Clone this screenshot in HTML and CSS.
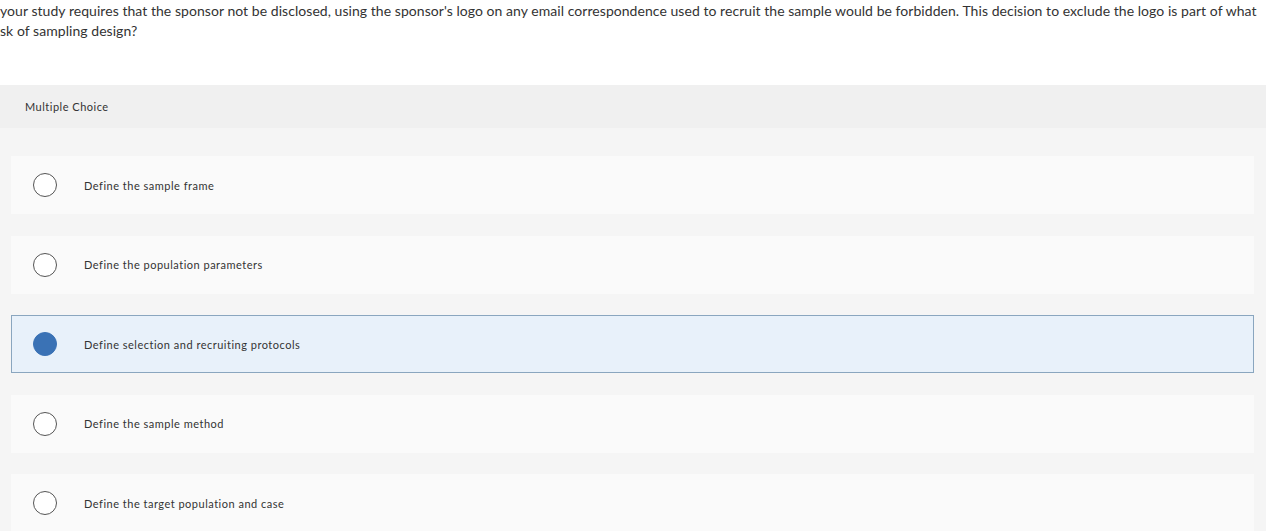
FILE: index.html
```html
<!DOCTYPE html>
<html lang="en">
<head>
    <meta charset="UTF-8">
    <title>Multiple Choice</title>
    <link rel="stylesheet" href="styles.css">
</head>
<body>
    <div class="question">
        <p>your study requires that the sponsor not be disclosed, using the sponsor's logo on any email correspondence used to recruit the sample would be forbidden. This decision to exclude the logo is part of what</p>
        <p>sk of sampling design?</p>
    </div>

    <div class="mc_head">Multiple Choice</div>

    <ul class="choices">
        <li class="choice"><span class="radio"></span><span class="label">Define the sample frame</span></li>
        <li class="choice"><span class="radio"></span><span class="label">Define the population parameters</span></li>
        <li class="choice on"><span class="radio"></span><span class="label">Define selection and recruiting protocols</span></li>
        <li class="choice"><span class="radio"></span><span class="label">Define the sample method</span></li>
        <li class="choice"><span class="radio"></span><span class="label">Define the target population and case</span></li>
    </ul>
</body>
</html>
```

FILE: styles.css
```css
*{padding:0;margin:0;box-sizing:border-box;}
body{font-family:Lato,"Liberation Sans",sans-serif;color:#333;background:#fff;}

.question{padding:1px 0 0 0;height:85px;}
.question p{font-size:14px;line-height:20px;white-space:nowrap;letter-spacing:0.05px;}

.mc_head{height:43px;background:#f0f0f0;font-size:11px;line-height:43px;padding-left:25px;color:#333;letter-spacing:0.5px;}

.choices{list-style:none;background:#f5f5f5;padding:28px 12px 0 11px;}
.choice{display:flex;align-items:center;height:58px;margin-bottom:21.5px;background:#fafafa;border:1px solid #fafafa;}
.choice .radio{width:24px;height:24px;border-radius:50%;border:1px solid #555;background:#fff;margin-left:21px;}
.choice .label{font-size:11px;margin-left:27px;color:#333;letter-spacing:0.5px;}
.choice.on{background:#e8f1fa;border-color:#8aa6bf;}
.choice.on .radio{background:#3a72b5;border-color:#3a72b5;}
```
